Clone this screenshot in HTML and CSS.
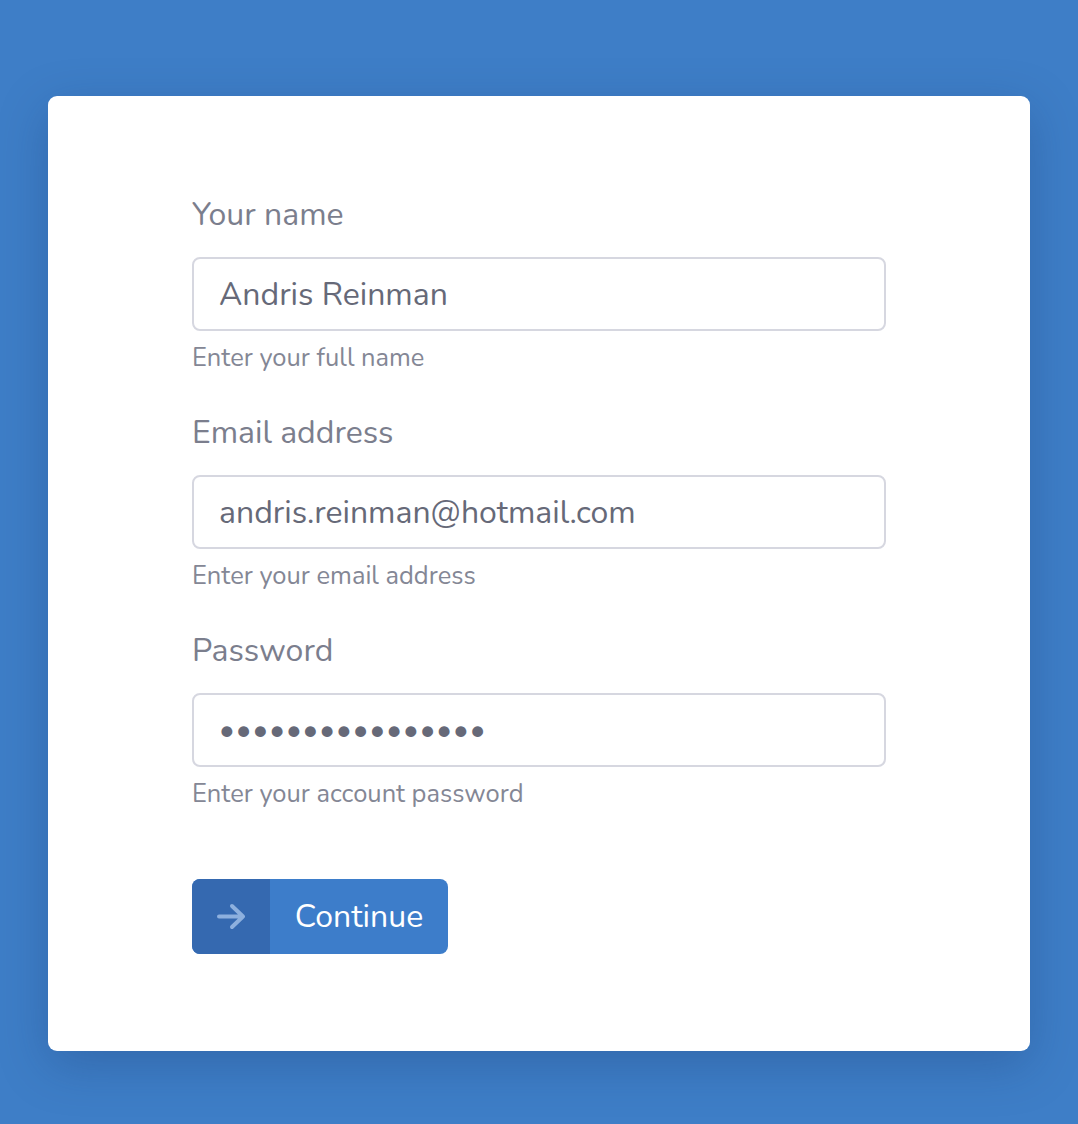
FILE: index.html
```html
<!DOCTYPE html>
<html lang="en">
<head>
<meta charset="utf-8">
<title>Sign up</title>
<link rel="stylesheet" href="styles.css">
</head>
<body>
<main class="card">
  <form class="form">
    <div class="field">
      <label class="label" for="name">Your name</label>
      <input class="input" id="name" type="text" value="Andris Reinman">
      <p class="hint">Enter your full name</p>
    </div>
    <div class="field">
      <label class="label" for="email">Email address</label>
      <input class="input" id="email" type="email" value="andris.reinman@hotmail.com">
      <p class="hint">Enter your email address</p>
    </div>
    <div class="field">
      <label class="label" for="pass">Password</label>
      <input class="input input-pass" id="pass" type="password" value="supersecretpass1">
      <p class="hint">Enter your account password</p>
    </div>
    <button class="button" type="button">
      <span class="button-icon">
        <svg width="30" height="27" viewBox="0 0 30 27" fill="none" stroke="currentColor" stroke-width="4" stroke-linecap="round" stroke-linejoin="round"><path d="M3 13.5h24M16 3l11 10.5-11 10.5"/></svg>
      </span>
      <span class="button-text">Continue</span>
    </button>
  </form>
</main>
</body>
</html>
```
FILE: styles.css
```css
html, body {
  margin: 0;
  padding: 0;
}
body {
  background: #3e7ec7;
  font-family: "Nunito", "Lato", "Open Sans", sans-serif;
  padding: 96px 48px 73px;
  box-sizing: border-box;
  min-height: 1124px;
}
.card {
  background: #ffffff;
  border-radius: 9px;
  padding: 99px 144px 97px;
  box-shadow: 0 14px 50px rgba(20, 50, 100, 0.28);
}
.form {
  display: flex;
  flex-direction: column;
  align-items: flex-start;
}
.field {
  width: 100%;
  display: flex;
  flex-direction: column;
  margin-bottom: 40px;
}
.label {
  font-size: 32px;
  line-height: 40px;
  color: #7b7e8d;
  margin-bottom: 22px;
}
.input {
  box-sizing: border-box;
  height: 74px;
  width: 100%;
  border: 2px solid #d6d7e0;
  border-radius: 8px;
  padding: 0 25px;
  font-family: inherit;
  font-size: 32px;
  color: #666978;
  background: #fff;
  outline: none;
}
.input-pass {
  font-size: 30px;
  letter-spacing: 1px;
}
.hint {
  margin: 12px 0 0;
  font-size: 25.5px;
  line-height: 30px;
  color: #848795;
}
.button {
  margin-top: 30px;
  display: flex;
  align-items: stretch;
  height: 75px;
  width: 256px;
  padding: 0;
  border: none;
  border-radius: 8px;
  overflow: hidden;
  background: #3d7dca;
  cursor: pointer;
  font-family: inherit;
}
.button-icon {
  width: 78px;
  display: flex;
  align-items: center;
  justify-content: center;
  background: #3569b0;
  color: #8db0de;
}
.button-text {
  flex: 1;
  display: flex;
  align-items: center;
  justify-content: center;
  color: #ffffff;
  font-size: 32px;
}
```
